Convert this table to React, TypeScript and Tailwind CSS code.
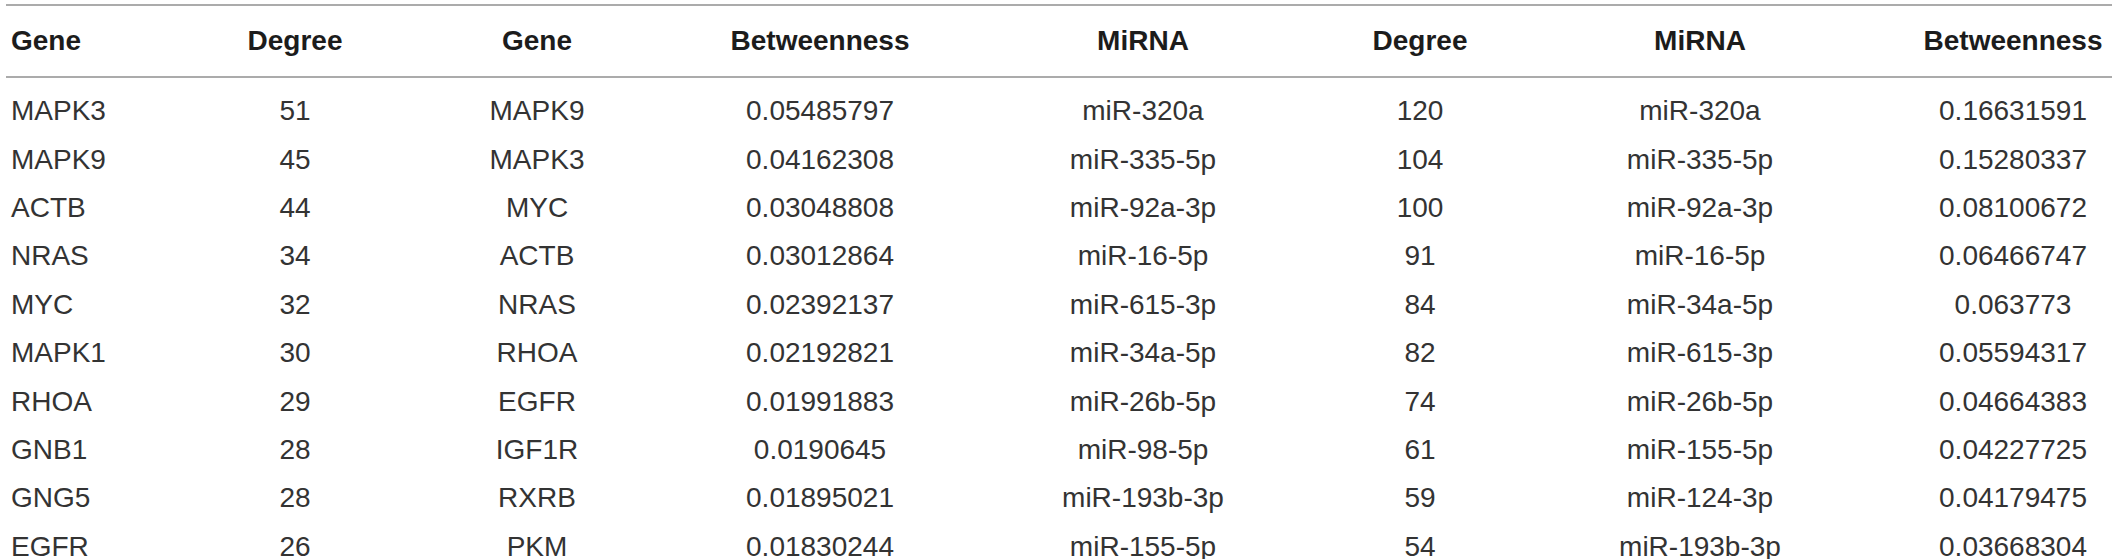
import React from "react";

type Row = [string, string, string, string, string, string, string, string];

const headers: string[] = [
  "Gene",
  "Degree",
  "Gene",
  "Betweenness",
  "MiRNA",
  "Degree",
  "MiRNA",
  "Betweenness",
];

const rows: Row[] = [
  ["MAPK3", "51", "MAPK9", "0.05485797", "miR-320a", "120", "miR-320a", "0.16631591"],
  ["MAPK9", "45", "MAPK3", "0.04162308", "miR-335-5p", "104", "miR-335-5p", "0.15280337"],
  ["ACTB", "44", "MYC", "0.03048808", "miR-92a-3p", "100", "miR-92a-3p", "0.08100672"],
  ["NRAS", "34", "ACTB", "0.03012864", "miR-16-5p", "91", "miR-16-5p", "0.06466747"],
  ["MYC", "32", "NRAS", "0.02392137", "miR-615-3p", "84", "miR-34a-5p", "0.063773"],
  ["MAPK1", "30", "RHOA", "0.02192821", "miR-34a-5p", "82", "miR-615-3p", "0.05594317"],
  ["RHOA", "29", "EGFR", "0.01991883", "miR-26b-5p", "74", "miR-26b-5p", "0.04664383"],
  ["GNB1", "28", "IGF1R", "0.0190645", "miR-98-5p", "61", "miR-155-5p", "0.04227725"],
  ["GNG5", "28", "RXRB", "0.01895021", "miR-193b-3p", "59", "miR-124-3p", "0.04179475"],
  ["EGFR", "26", "PKM", "0.01830244", "miR-155-5p", "54", "miR-193b-3p", "0.03668304"],
];

// column widths picked so every centered column sits where the figure has it
const gridCols =
  "grid grid-cols-[218px_142px_342px_224px_422px_132px_428px_198px]";

function Cell({ i, children }: { i: number; children: React.ReactNode }) {
  return (
    <div
      className={
        i === 0
          ? "flex items-center justify-start pl-[5px] whitespace-nowrap"
          : "flex items-center justify-center whitespace-nowrap"
      }
    >
      {children}
    </div>
  );
}

export default function App() {
  return (
    <main
      className="bg-white w-[2118px] h-[559px] overflow-hidden pt-[4px] pl-[6px]"
      style={{ fontFamily: '"Liberation Sans", Arial, sans-serif' }}
    >
      <section className="w-[2106px]">
        <div
          className={`${gridCols} h-[74px] border-t-2 border-b-2 border-[#ababab] text-[28px] font-bold text-[#1c1c1c]`}
        >
          {headers.map((h, i) => (
            <Cell key={i} i={i}>
              {h}
            </Cell>
          ))}
        </div>
        <div className="pt-[9px] text-[28px] leading-[20px] text-[#333333]">
          {rows.map((r, ri) => (
            <div key={ri} className={`${gridCols} h-[48.4px]`}>
              {r.map((v, i) => (
                <Cell key={i} i={i}>
                  {v}
                </Cell>
              ))}
            </div>
          ))}
        </div>
      </section>
    </main>
  );
}
